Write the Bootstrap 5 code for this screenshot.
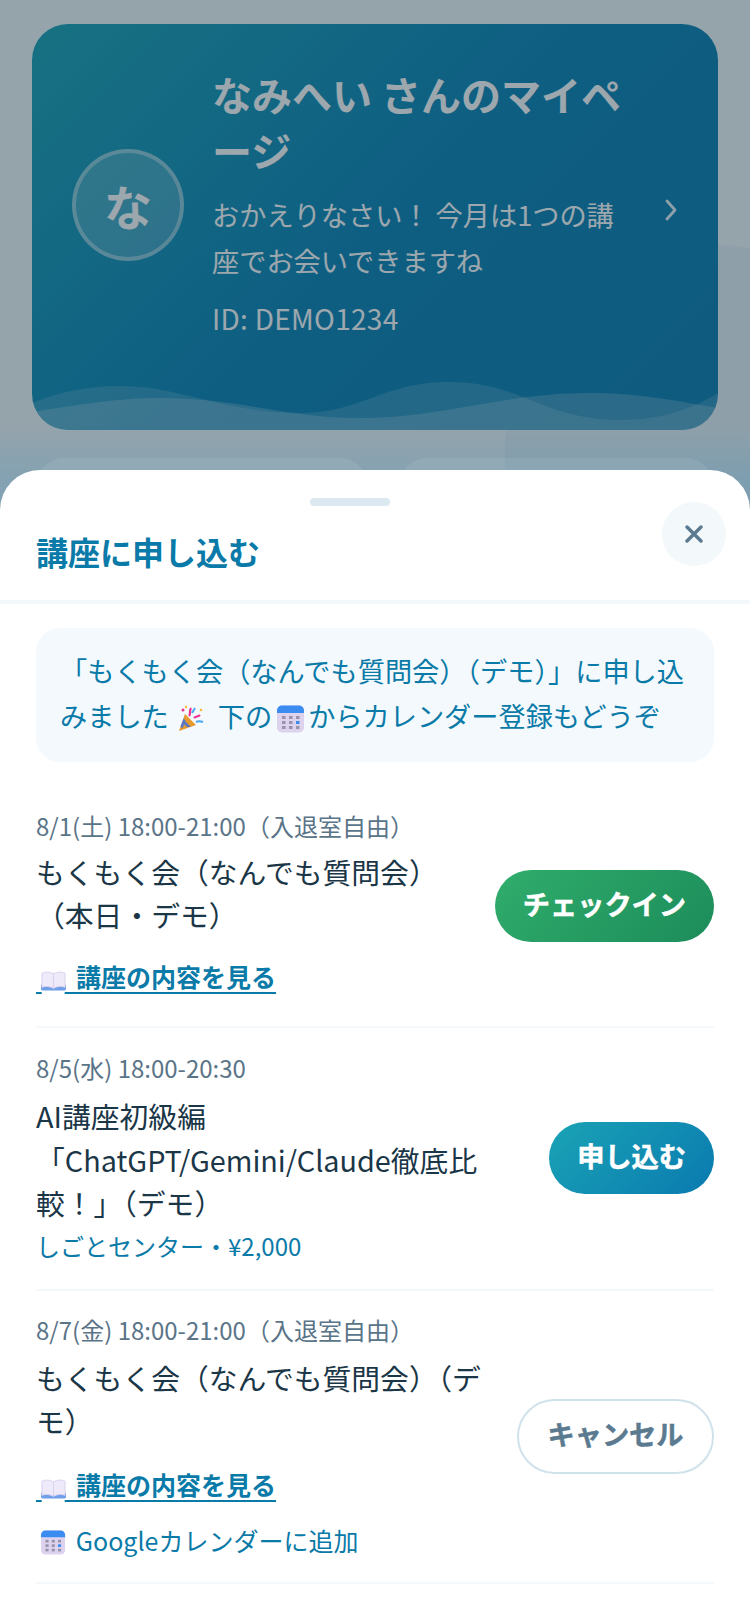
<!DOCTYPE html>
<html lang="ja">
<head>
<meta charset="utf-8">
<title>マイページ</title>
<link href="https://cdn.jsdelivr.net/npm/bootstrap@5.3.0/dist/css/bootstrap.min.css" rel="stylesheet">
<style>
html,body{width:750px;height:1624px;margin:0;overflow:hidden}
body{font-family:"Noto Sans CJK JP","Noto Sans",sans-serif;background:#f3f9fc;color:#1a3647;position:relative}
.stage{height:1624px;padding:24px 32px 0;position:relative;overflow:hidden}
.stage::before{content:"";position:absolute;width:420px;height:420px;border-radius:50%;background:rgba(10,122,168,.05);left:505px;top:245px}
.hero{position:relative;height:406px;border-radius:36px;overflow:hidden;background:linear-gradient(135deg,#1aa3b5 0,#0a82b5 50%,#0a7cae 100%);color:#fff;padding:44px 40px 88px;gap:28px;z-index:1}
.avatar{width:112px;height:112px;border-radius:50%;border:4px solid rgba(255,255,255,.4);background:rgba(255,255,255,.2);font-size:48px;font-weight:700;flex:none}
.hero-name{font-size:40px;font-weight:700;line-height:56px;margin:0 0 13px;line-break:anywhere}
.hero-sub{font-size:27.2px;line-height:46px;margin:0 0 15px}
.hero-id{font-size:28px;line-height:40px;letter-spacing:.3px}
.hero-body{position:relative;z-index:1;width:418px;flex:none;margin-top:-6px}
.chev{flex:none;margin:10px 0 0 6px}
.waves{position:absolute;left:0;top:0}
.tiles{gap:31px;margin:28px 4px 0;position:relative;z-index:6}
.tile{height:200px;border-radius:28px;background:rgba(255,255,255,.08);flex:1}
.tile-a{flex:none;width:332px}
.scrim{position:absolute;inset:0;background:linear-gradient(180deg,rgba(20,45,60,.42) 0,rgba(20,45,60,.42) 425px,rgba(20,75,105,.5) 480px);z-index:5}
.sheet{position:absolute;left:0;right:0;top:470px;bottom:0;background:#fff;border-radius:40px 40px 0 0;z-index:7;overflow:hidden}
.grip{width:80px;height:8px;border-radius:4px;background:#dce9f0;margin:28px 0 0 310px}
.sheet-head{height:98px;padding:0 36px;border-bottom:4px solid #f3f8fb;position:relative}
.sheet-title{font-size:32px;font-weight:700;color:#0a7aa8;margin:0;line-height:44px;padding-top:23px}
.closer{position:absolute;width:64px;height:64px;border-radius:50%;background:#f3f8fb;border:0;right:24px;top:-4px;padding:0}
.notice{margin:24px 36px 23px;padding:20px 24px;background:#f3f9fc;border-radius:24px;color:#0a7aa8;font-size:27.2px;line-height:45px;height:134px}
.notice svg{display:inline-block;vertical-align:-6px}
.pop{margin:0 13px 0 8px}
.cal{margin:0 3px 0 5px}
.events{padding:0 36px}
.evt{border-bottom:2px solid #f3f8fb;gap:16px}
.evt-main{flex:1;min-width:0}
.evt-date{font-size:24px;line-height:36px;color:#5a7488;margin-bottom:8px}
.evt-title{font-size:28.8px;line-height:43.2px;color:#1a3647}
.evt-sub{font-size:24px;line-height:36px;color:#0a7aa8;margin-top:4px}
.ilink{font-size:25px;line-height:40px;color:#0a7aa8;display:block;width:fit-content}
.ilink-strong{font-weight:700;text-decoration:underline;text-underline-offset:5px;text-decoration-thickness:2px}
.ilink-plain{text-decoration:none;font-weight:400;margin-top:16px}
.ilink svg{display:inline-block;vertical-align:-4px;margin:0 -1px}
.act{flex:none;height:72px;border-radius:36px;font-size:27.2px;font-weight:700;-webkit-text-stroke:.5px currentColor;line-height:1;padding:0 28px 5px;border:0;color:#fff}
.act-go{background:linear-gradient(135deg,#30ad6c,#1c8c5a);margin-top:8px}
.act-apply{background:linear-gradient(135deg,#1aa3b5,#0a7ab0);margin-top:2px}
.act-cancel{background:#fff;color:#5b7a90;border:2.5px solid #cfe2ec;height:75px;border-radius:38px;padding:0 28.5px 5px}
.e1{padding:23px 0 30px}
.e1 .evt-date{margin-bottom:6px}
.e1 .ilink-strong{margin-top:20px}
.e2{padding:22px 0 25px}
.e3{padding:21px 0 22px}
.e3 .ilink-strong{margin-top:22px}
</style>
</head>
<body>
<div class="stage">
  <div class="hero d-flex align-items-center">
    <div class="avatar d-flex align-items-center justify-content-center">な</div>
    <div class="hero-body">
      <h1 class="hero-name">なみへい さんのマイページ</h1>
      <p class="hero-sub">おかえりなさい！ 今月は1つの講座でお会いできますね</p>
      <div class="hero-id">ID: DEMO1234</div>
    </div>
    <svg class="chev" width="14" height="24" viewBox="0 0 14 24" fill="none" stroke="#fff" stroke-opacity=".9" stroke-width="2.8" stroke-linecap="round" stroke-linejoin="round"><path d="M3 3l8 9-8 9"/></svg>
    <svg class="waves" width="686" height="406" viewBox="0 0 686 406"><path fill="#fff" fill-opacity=".15" d="M0 379C30 367 58 362 88 362C150 362 190 389 268 389C330 389 350 358 418 358C490 358 510 396 588 396C630 396 660 385 686 369V406H0Z"/><path fill="#fff" fill-opacity=".2" d="M0 388C50 380 90 374 128 374C210 374 250 394 328 394C410 394 470 369 558 369C610 369 650 378 686 384V406H0Z"/></svg>
  </div>
  <div class="tiles d-flex"><div class="tile tile-a"></div><div class="tile"></div></div>
</div>
<div class="scrim"></div>
<div class="sheet">
  <div class="grip"></div>
  <div class="sheet-head">
    <h2 class="sheet-title">講座に申し込む</h2>
    <button class="closer d-flex align-items-center justify-content-center" aria-label="閉じる"><svg width="18" height="18" viewBox="0 0 18 18" fill="none" stroke="#5b7a90" stroke-width="3.4" stroke-linecap="round"><path d="M2 2l14 14M16 2L2 16"/></svg></button>
  </div>
  <div class="notice">「もくもく会（なんでも質問会）（デモ）」に申し込<wbr>みました<svg class="pop" width="28" height="28" viewBox="0 0 28 28"><path fill="#e89a2c" d="M2 26L8 9l11 11z"/><path fill="#5a78c8" d="M3.500 21.500l3-8 2 2-3 8zM10 22l-3.500-3.500 1-3L14 22z"/><path fill="none" stroke="#f0308f" stroke-width="2.2" d="M12 11c2-2 0-5 2-8M17 13c2-2 4-1 6-3"/><path fill="none" stroke="#4aa6ee" stroke-width="2" d="M15 8l3-5M19 17c2-1 4-1 7 0"/><circle cx="6" cy="5" r="1.500" fill="#f0308f"/><circle cx="9" cy="2" r="1.200" fill="#f4b83a"/><circle cx="24" cy="5" r="1.300" fill="#f4b83a"/></svg>下の<svg class="cal" width="28" height="28" viewBox="0 0 28 28"><rect width="27" height="27" y=".5" rx="5" fill="#ddd3ee"/><path fill="#3a8cf0" d="M0 8V5.500a5 5 0 015-5h17a5 5 0 015 5V8z"/><g fill="#9a93ac"><rect x="5" y="11" width="3.500" height="3"/><rect x="12" y="11" width="3.500" height="3"/><rect x="19" y="11" width="3.500" height="3"/><rect x="5" y="16" width="3.500" height="3"/><rect x="12" y="16" width="3.500" height="3"/><rect x="5" y="21" width="3.500" height="3"/><rect x="12" y="21" width="3.500" height="3"/><rect x="19" y="21" width="3.500" height="3"/></g><rect x="19" y="16" width="3.500" height="3" fill="#3a8cf0"/></svg>からカレンダー登録もどうぞ</div>
  <div class="events">
    <div class="evt e1 d-flex align-items-center">
      <div class="evt-main">
        <div class="evt-date">8/1(土) 18:00-21:00（入退室自由）</div>
        <div class="evt-title">もくもく会（なんでも質問会）（本日・デモ）</div>
        <a href="#" class="ilink ilink-strong">&nbsp;<svg width="25" height="20" viewBox="0 0 26 20"><path fill="#6f9fe8" d="M0 14h26v4a2 2 0 01-2 2H2a2 2 0 01-2-2z"/><path fill="#efeafa" stroke="#d8cfee" d="M1 2c4-2 8-1.500 12 .5v15C9 15.500 5 15 1 16.500zM25 2c-4-2-8-1.500-12 .5v15c4-2 8-2.500 12-1z"/></svg>&nbsp;&nbsp;講座の内容を見る</a>
      </div>
      <button class="act act-go">チェックイン</button>
    </div>
    <div class="evt e2 d-flex align-items-center">
      <div class="evt-main">
        <div class="evt-date">8/5(水) 18:00-20:30</div>
        <div class="evt-title">AI講座初級編「ChatGPT/Gemini/Claude徹底比較！」（デモ）</div>
        <div class="evt-sub">しごとセンター・¥2,000</div>
      </div>
      <button class="act act-apply">申し込む</button>
    </div>
    <div class="evt e3 d-flex align-items-center">
      <div class="evt-main">
        <div class="evt-date">8/7(金) 18:00-21:00（入退室自由）</div>
        <div class="evt-title">もくもく会（なんでも質問会）（デモ）</div>
        <a href="#" class="ilink ilink-strong">&nbsp;<svg width="25" height="20" viewBox="0 0 26 20"><path fill="#6f9fe8" d="M0 14h26v4a2 2 0 01-2 2H2a2 2 0 01-2-2z"/><path fill="#efeafa" stroke="#d8cfee" d="M1 2c4-2 8-1.500 12 .5v15C9 15.500 5 15 1 16.500zM25 2c-4-2-8-1.500-12 .5v15c4-2 8-2.500 12-1z"/></svg>&nbsp;&nbsp;講座の内容を見る</a>
        <a href="#" class="ilink ilink-plain">&nbsp;<svg width="25" height="25" viewBox="0 0 28 28"><rect width="27" height="27" y=".5" rx="5" fill="#ddd3ee"/><path fill="#3a8cf0" d="M0 8V5.500a5 5 0 015-5h17a5 5 0 015 5V8z"/><g fill="#9a93ac"><rect x="5" y="11" width="3.500" height="3"/><rect x="12" y="11" width="3.500" height="3"/><rect x="19" y="11" width="3.500" height="3"/><rect x="5" y="16" width="3.500" height="3"/><rect x="12" y="16" width="3.500" height="3"/><rect x="5" y="21" width="3.500" height="3"/><rect x="12" y="21" width="3.500" height="3"/><rect x="19" y="21" width="3.500" height="3"/></g><rect x="19" y="16" width="3.500" height="3" fill="#3a8cf0"/></svg>&nbsp;&nbsp;Googleカレンダーに追加</a>
      </div>
      <button class="act act-cancel">キャンセル</button>
    </div>
  </div>
</div>
<script src="https://cdn.jsdelivr.net/npm/bootstrap@5.3.0/dist/js/bootstrap.bundle.min.js"></script>
</body>
</html>
